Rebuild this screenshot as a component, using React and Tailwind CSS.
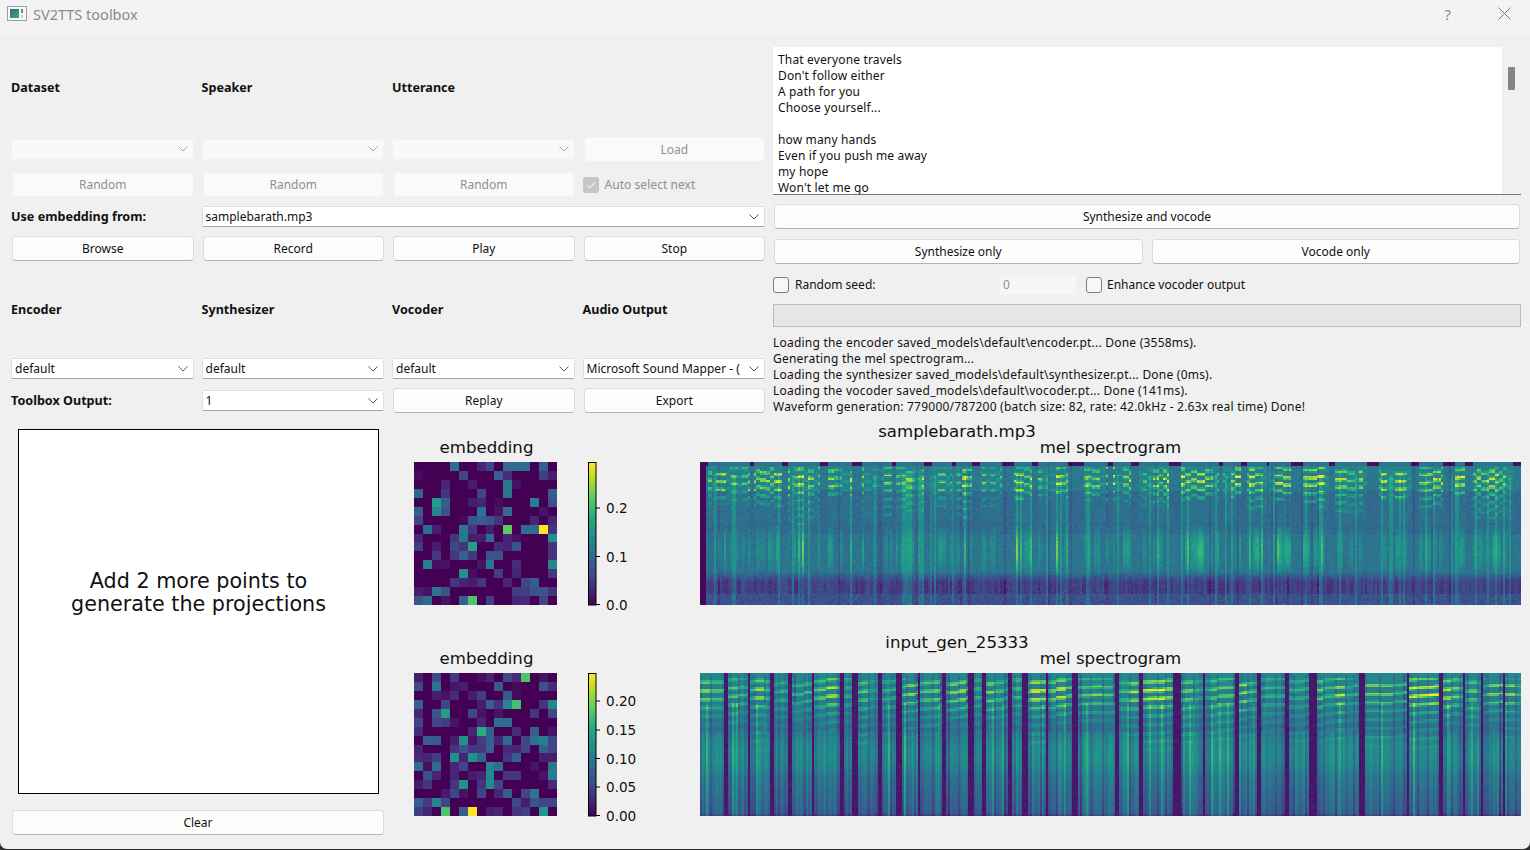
import React, { useMemo } from "react";

const STOPS = ["#440154","#482475","#414487","#355f8d","#2a788e","#21918c","#22a884","#44bf70","#7ad151","#bddf26","#fde725"];
const hexRgb = (h) => [1, 3, 5].map((i) => parseInt(h.slice(i, i + 2), 16));
function viridis(t) {
  const x = Math.max(0, Math.min(0.9999, t)) * 10;
  const i = Math.floor(x);
  const a = hexRgb(STOPS[i]);
  const b = hexRgb(STOPS[i + 1]);
  const f = x - i;
  return `rgb(${a.map((v, k) => Math.round(v + (b[k] - v) * f)).join(",")})`;
}
function rng(seed) {
  let s = seed;
  return () => {
    s = (s * 1664525 + 1013904223) % 4294967296;
    return s / 4294967296;
  };
}

const HEAT1 = [
  {4:.35,7:.1,8:.2,10:.35,11:.35,12:.35,14:.3},
  {0:.03,5:.2,9:.3,10:.12,14:.18,15:.08},
  {3:.1,6:.07,10:.4,11:.05},
  {0:.33,3:.15,7:.2,10:.38,15:.3},
  {2:.55,3:.3,6:.08,7:.1,9:.03,13:.42,15:.25},
  {0:.3,2:.45,3:.25,7:.38,9:.05,10:.35,14:.05},
  {0:.2,5:.03,6:.27,7:.3,8:.25,9:.15,13:.1,15:.1},
  {1:.35,2:.08,5:.4,6:.15,8:.08,10:.75,12:.35,13:.35,14:1,15:.15},
  {0:.1,4:.15,5:.4,6:.08,7:.08,8:.35,10:.1,11:.05,15:.5},
  {0:.18,2:.08,4:.22,5:.15,6:.55,9:.12,10:.1,11:.25,15:.15},
  {2:.17,4:.15,5:.3,6:.15,8:.25,9:.25,15:.15},
  {1:.42,2:.04,3:.05,7:.06,8:.4,11:.12,15:.45},
  {5:.5,6:.04,9:.18,11:.1,15:.15},
  {4:.15,5:.1,6:.08,7:.15,10:.1,12:.2,13:.3},
  {0:.08,1:.05,2:.38,3:.25,11:.17,12:.18,13:.25,14:.25,15:.15},
  {0:.25,1:.35,3:.05,5:.3,6:.72,8:.18,11:.1,12:.12,14:.2},
];
const HEAT2 = [
  {0:.08,2:.22,4:.15,7:.04,8:.1,10:.22,11:.12,12:.72,14:.05},
  {0:.22,2:.38,4:.06,5:.08,9:.28,11:.03,14:.25,15:.12},
  {2:.08,3:.05,4:.12,6:.08,7:.18,10:.28,11:.03},
  {0:.3,3:.2,7:.08,8:.3,9:.15,10:.45,11:.7,14:.15,15:.45},
  {0:.1,2:.25,3:.55,6:.2,7:.05,9:.05,13:.15,15:.22},
  {0:.2,2:.22,3:.18,4:.05,7:.1,9:.35,10:.35},
  {0:.12,6:.1,7:.62,8:.3,11:.12,13:.3,15:.05},
  {1:.3,2:.28,4:.08,5:.5,6:.05,7:.18,8:.3,9:.1,10:.35,12:.2,13:.38,14:.42,15:.2},
  {0:.1,4:.15,5:.25,6:.15,7:.15,8:.3,10:.12,11:.1,12:.2,14:.3,15:.2},
  {0:.12,1:.1,2:.18,4:.5,5:.1,6:.5,7:.32,10:.15,11:.3,14:.08,15:.08},
  {0:.35,1:.04,2:.35,4:.1,5:.2,8:.45,9:.35,13:.05,15:.4},
  {1:.25,2:.1,4:.1,6:.07,7:.1,8:.47,10:.15,11:.15,14:.05,15:.42},
  {0:.07,1:.15,4:.15,5:.5,7:.15,8:.47,9:.2,15:.12},
  {3:.07,4:.2,5:.05,7:.2,9:.1,10:.3,12:.2,13:.38},
  {0:.3,1:.17,2:.45,3:.2,11:.22,12:.08,13:.27,14:.2,15:.2},
  {0:.18,1:.1,3:.72,5:.3,6:1,8:.08,9:.1,11:.15,12:.18,14:.52},
];

const BURSTS = [[707,748],[753,780],[787,818],[827,850],[862,890],[895,922],[932,950],[955,970],[980,1000],[1014,1031],[1038,1067],[1083,1107],[1112,1128],[1138,1167],[1179,1217],[1222,1238],[1246,1264],[1267,1288],[1302,1326],[1333,1364],[1377,1408],[1417,1441],[1453,1463],[1472,1510]];
const SILENCE = [[724,727],[747,749],[770,772],[787,791],[811,813],[839,842],[851,857],[877,881],[895,900],[917,919],[941,945],[968,972],[982,984],[1007,1010],[1022,1026],[1045,1047],[1071,1077],[1114,1116],[1138,1141],[1172,1179],[1201,1203],[1234,1237],[1255,1258],[1283,1287],[1308,1315],[1358,1362],[1405,1407],[1438,1441],[1462,1463],[1480,1481],[1501,1503]];

const COLS = 410;
const ROWS = 80;

function spec1() {
  const r = rng(71);
  const out = [];
  const burstInfo = BURSTS.map(() => ({ tail: 0.24 + r() * r() * 0.3, mid: 0.5 + r() * 0.5 }));
  let sub = 0;
  let gain = 1;
  let phase = 0;
  for (let c = 0; c < COLS; c++) {
    const x = 700 + c * 2;
    const bi = BURSTS.findIndex(([a, b]) => x >= a && x <= b);
    const inB = bi >= 0;
    const info = inB ? burstInfo[bi] : null;
    if (sub-- <= 0) {
      sub = 1 + Math.floor(r() * 3);
      gain = r() > 0.25 ? 0.6 + r() * 0.6 : 0.2;
      phase = r() * 0.055;
    }
    const line = r();
    const streak = r();
    const lowDepth = 0.09 + r() * 0.11;
    const col = [];
    for (let j = 0; j < ROWS; j++) {
      const f = j / ROWS;
      let v;
      if (f < 0.2) v = 0.43;
      else if (f < 0.5) v = 0.37;
      else if (f < 0.76) v = 0.39;
      else if (f < 0.83) v = 0.39 - ((f - 0.76) / 0.07) * (0.39 - lowDepth - 0.04);
      else if (f < 0.92) v = lowDepth + 0.04;
      else v = 0.22 + r() * 0.06;
      v += (r() - 0.5) * 0.06;
      if (f < 0.025) v = inB ? 0.38 : 0.08;
      if (inB && f >= 0.035 && f < info.tail) {
        const wave = Math.sin(((f + phase) / 0.055) * Math.PI * 2);
        const stripe = wave > 0 ? Math.pow(wave, 0.7) : 0;
        const w = Math.exp(-Math.pow((f - 0.12) / 0.1, 2));
        v += stripe * gain * (0.36 * w + 0.13) * (0.75 + r() * 0.45);
      }
      if (inB && f > 0.42 && f < 0.8) {
        const bump = Math.sin(((f - 0.42) / 0.38) * Math.PI);
        v += 0.32 * info.mid * streak * bump * gain - 0.03;
      }
      if (inB && line > 0.82 && f > 0.08) v += 0.13;
      if (!inB && line > 0.93 && f > 0.08) v += 0.1;
      if (line < 0.07) v -= 0.07;
      if (!inB && f < 0.5) v -= 0.03;
      if (x < 706) v = 0.03;
      col.push(v);
    }
    out.push(col);
  }
  return out;
}

function spec2() {
  const r = rng(311);
  const out = [];
  let phase = 0.01;
  let amp = 0.4;
  let drift = 0;
  let sub = 0;
  let gain = 1;
  let tail = 0.3;
  let edge = false;
  for (let c = 0; c < COLS; c++) {
    const x = 700 + c * 2;
    const sil = SILENCE.some(([a, b]) => x >= a && x <= b);
    const near = SILENCE.some(([a, b]) => x >= a - 3 && x <= b + 3);
    if (sil) {
      phase = r() * 0.06;
      amp = 0.18 + r() * 0.26;
      drift = r() * 0.0012;
      tail = 0.28 + r() * 0.2;
    }
    edge = false;
    if (sub-- <= 0) {
      sub = 3 + Math.floor(r() * 5);
      gain = 0.5 + r() * 0.7;
      edge = true;
      phase += r() * 0.014 - 0.004;
    }
    phase += drift;
    const bright = r();
    const low = r();
    const col = [];
    for (let j = 0; j < ROWS; j++) {
      const f = j / ROWS;
      let v;
      if (f < 0.4) v = 0.46 - (f / 0.4) * 0.09;
      else if (f < 0.72) v = 0.37 + Math.sin(((f - 0.4) / 0.32) * Math.PI) * 0.08;
      else v = 0.37 - ((f - 0.72) / 0.28) * 0.09;
      if (f > 0.975) v = 0.2;
      v += (r() - 0.5) * 0.02;
      if (f >= 0.03 && f < tail + 0.1) {
        const wave = Math.sin(((f + phase) / 0.06) * Math.PI * 2);
        const s = wave > 0 ? Math.pow(wave, 0.7) : 0;
        const w = Math.exp(-Math.pow((f - 0.13) / 0.12, 2));
        const fade = f < tail ? 1 : 1 - (f - tail) / 0.1;
        v += s * gain * (amp * w + 0.1 * fade);
      }
      if (edge && f > 0.01) v -= 0.1;
      if (bright > 0.9 && f > 0.2) v += 0.15;
      if (f > 0.4) v += low * low * 0.1;
      if (near) v -= 0.07;
      if (sil) v = 0.05 + r() * 0.03;
      col.push(v);
    }
    out.push(col);
  }
  return out;
}

function Spectrogram({ make }) {
  const paths = useMemo(() => {
    const data = make();
    const LEVELS = 48;
    const buckets = Array.from({ length: LEVELS }, () => []);
    data.forEach((col, c) => {
      col.forEach((v, j) => {
        const k = Math.max(0, Math.min(LEVELS - 1, Math.round(v * (LEVELS - 1))));
        buckets[k].push(`M${c} ${j}h1v1h-1z`);
      });
    });
    return buckets.map((b, i) => ({ d: b.join(""), fill: viridis(i / (LEVELS - 1)) }));
  }, [make]);
  return (
    <div className="w-[821px] h-[143px] shrink-0 overflow-hidden">
      <svg width="821" height="143" viewBox={`0 0 ${COLS} ${ROWS}`} preserveAspectRatio="none" shapeRendering="crispEdges" className="block blur-[0.7px]">
        {paths.map((p, i) => p.d && <path key={i} d={p.d} fill={p.fill} />)}
      </svg>
    </div>
  );
}

function Heatmap({ data }) {
  return (
    <svg width="143" height="143" viewBox="0 0 16 16" shapeRendering="crispEdges" className="block shrink-0">
      {data.map((row, y) =>
        Array.from({ length: 16 }, (_, x) => (
          <rect key={x} x={x} y={y} width="1" height="1" fill={viridis(row[x] || 0)} />
        ))
      )}
    </svg>
  );
}

function Colorbar({ id, ticks }) {
  return (
    <svg width="112" height="143" className="block shrink-0 overflow-visible">
      <defs>
        <linearGradient id={id} x1="0" y1="1" x2="0" y2="0">
          {STOPS.map((c, i) => <stop key={i} offset={i / 10} stopColor={c} />)}
        </linearGradient>
      </defs>
      <rect x="0.5" y="0.5" width="7.5" height="142.5" fill={`url(#${id})`} stroke="#000" strokeWidth="1" />
      {ticks.map(([label, y]) => (
        <g key={label}>
          <line x1="8" x2="12" y1={y} y2={y} stroke="#000" strokeWidth="1" />
          <text x="18" y={y + 5} fontSize="13.6" fill="#111" style={{ fontFamily: '"DejaVu Sans", sans-serif' }}>{label}</text>
        </g>
      ))}
    </svg>
  );
}

function Plot({ heading, heat, id, ticks, make, className }) {
  return (
    <div className={className}>
      <div className="h-5 leading-[22px] text-center text-[16.6px] text-[#111]">{heading}</div>
      <div className="flex h-[21px] text-[16.6px] leading-[14px] text-[#111]">
        <div className="ml-[31px] w-[143px] text-center">embedding</div>
        <div className="w-[142px]" />
        <div className="w-[821px] text-center">mel spectrogram</div>
      </div>
      <div className="flex pl-[30px]">
        <Heatmap data={heat} />
        <div className="ml-[31px]"><Colorbar id={id} ticks={ticks} /></div>
        <Spectrogram make={make} />
      </div>
    </div>
  );
}

const Chevron = ({ off }) => (
  <svg width="10" height="6" viewBox="0 0 10 6" fill="none" stroke={off ? "#a8a8a8" : "#5a5a5a"} strokeWidth="1" className="shrink-0">
    <path d="M0.5 0.5 L5 5 L9.5 0.5" />
  </svg>
);

function Combo({ value, off, className = "" }) {
  return (
    <div className={`h-[21px] flex items-center justify-between pl-[3px] pr-[5px] border border-solid rounded-[2px] overflow-hidden whitespace-nowrap ${off ? "bg-[#f9f9f9] border-[#f2f2f2]" : "bg-white border-[#dedede] border-b-[#a5a5a5]"} ${className}`}>
      <span className="flex-1">{value}</span>
      <span className="ml-[3px] flex"><Chevron off={off} /></span>
    </div>
  );
}

function Btn({ children, off, className = "" }) {
  return (
    <button className={`h-[25px] flex items-center justify-center rounded-[4px] border border-solid ${off ? "bg-[#fafafa] border-[#f3f3f3] text-[#8f8f8f]" : "bg-[#fdfdfd] border-[#dcdcdc] border-b-[#b4b4b4] text-[#111]"} ${className}`}>
      {children}
    </button>
  );
}

const Label = ({ children, className = "" }) => <div className={`font-bold text-[12.6px] text-[#111] whitespace-nowrap ${className}`}>{children}</div>;

const Check = ({ className = "" }) => (
  <span className={`w-4 h-4 shrink-0 rounded-[3px] border border-solid border-[#7d7d7d] bg-[#f7f7f7] ${className}`} />
);

const grid4 = "grid grid-cols-4 gap-x-[8px] items-center";

const LOG = [
  "Loading the encoder saved_models\\default\\encoder.pt... Done (3558ms).",
  "Generating the mel spectrogram...",
  "Loading the synthesizer saved_models\\default\\synthesizer.pt... Done (0ms).",
  "Loading the vocoder saved_models\\default\\vocoder.pt... Done (141ms).",
  "Waveform generation: 779000/787200 (batch size: 82, rate: 42.0kHz - 2.63x real time) Done!",
];
const LYRICS = ["That everyone travels", "Don't follow either", "A path for you", "Choose yourself...", "\u00a0", "how many hands", "Even if you push me away", "my hope", "Won't let me go"];

export default function App() {
  return (
    <div className="w-[1530px] h-[850px] bg-[#2e2e2e] overflow-hidden">
      <div className="h-[849px] bg-[#f0f0f0] rounded-b-[7px] overflow-hidden flex flex-col text-[12px] leading-4 text-[#111]" style={{ fontFamily: '"Noto Sans", sans-serif' }}>
        <header className="h-[34px] shrink-0 bg-[#f3f3f3] flex items-center pb-[7px] pl-[7px] pr-[19px] text-[#8b8b8b]">
          <svg width="20" height="15" viewBox="0 0 20 15" className="shrink-0">
            <defs>
              <linearGradient id="ic" x1="0" y1="0" x2="1" y2="1">
                <stop offset="0" stopColor="#2a6f7e" />
                <stop offset="1" stopColor="#45a873" />
              </linearGradient>
            </defs>
            <rect x="0.5" y="0.5" width="19" height="14" fill="#f8f8f8" stroke="#9c9c9c" />
            <rect x="3" y="3" width="9" height="9" fill="url(#ic)" />
            <rect x="14" y="3" width="2" height="4" fill="#4f8f8f" />
            <rect x="14" y="9" width="2" height="3" fill="#b9cfcf" />
          </svg>
          <span className="ml-[6px] text-[14.5px]">SV2TTS toolbox</span>
          <span className="ml-auto text-[15px] mr-[47px]">?</span>
          <svg width="13" height="13" viewBox="0 0 13 13" stroke="#7a7a7a" strokeWidth="1" fill="none">
            <path d="M0.5 0.5 L12.5 12.5 M12.5 0.5 L0.5 12.5" />
          </svg>
        </header>

        <div className="flex h-[387px] shrink-0">
          <section className="w-[770px] shrink-0 pl-[11px] pr-[5px] pt-[43px]">
            <div className={`${grid4} h-[22px]`}>
              <Label>Dataset</Label><Label>Speaker</Label><Label>Utterance</Label>
            </div>
            <div className={`${grid4} h-[25px] mt-[37px]`}>
              <Combo off /><Combo off /><Combo off />
              <Btn off className="ml-px mt-px">Load</Btn>
            </div>
            <div className={`${grid4} h-[25px] mt-[11px]`}>
              <Btn off className="ml-px">Random</Btn><Btn off className="ml-px">Random</Btn><Btn off className="ml-px">Random</Btn>
              <div className="flex items-center text-[#8f8f8f] tracking-[0.05px]">
                <span className="w-4 h-4 rounded-[3px] bg-[#c6c6c6] flex items-center justify-center shrink-0">
                  <svg width="10" height="8" viewBox="0 0 10 8" fill="none" stroke="#fff" strokeWidth="1"><path d="M1 4 L4 7 L9 1" /></svg>
                </span>
                <span className="ml-[6px]">Auto select next</span>
              </div>
            </div>
            <div className={`${grid4} h-[21px] mt-[9px]`}>
              <Label>Use embedding from:</Label>
              <Combo value="samplebarath.mp3" className="col-span-3" />
            </div>
            <div className={`${grid4} h-[25px] mt-[9px]`}>
              <Btn className="ml-px">Browse</Btn><Btn className="ml-px">Record</Btn><Btn className="ml-px">Play</Btn><Btn className="ml-px">Stop</Btn>
            </div>
            <div className={`${grid4} h-[22px] mt-[38px]`}>
              <Label>Encoder</Label><Label>Synthesizer</Label><Label>Vocoder</Label><Label>Audio Output</Label>
            </div>
            <div className={`${grid4} h-[25px] mt-[35px]`}>
              <Combo value="default" /><Combo value="default" /><Combo value="default" />
              <Combo value="Microsoft Sound Mapper - (" />
            </div>
            <div className={`${grid4} h-[25px] mt-[7px]`}>
              <Label>Toolbox Output:</Label>
              <Combo value="1" />
              <Btn className="ml-px">Replay</Btn><Btn className="ml-px">Export</Btn>
            </div>
          </section>

          <section className="w-[760px] shrink-0 pl-[3px] pr-[9px] pt-[13px]">
            <div className="h-[148px] flex border-b border-solid border-b-[#767676] overflow-hidden">
              <div className="flex-1 bg-white pl-[5px] pt-[5px] tracking-[0.15px]">
                {LYRICS.map((l, i) => <div key={i}>{l}</div>)}
              </div>
              <div className="w-[19px] shrink-0 flex justify-center pt-[20px] pr-[1px]">
                <div className="w-[7px] h-[23px] rounded-[1px] bg-[#858585]" />
              </div>
            </div>
            <div className="grid px-px mt-[9px]">
              <Btn>Synthesize and vocode</Btn>
            </div>
            <div className="grid grid-cols-2 gap-x-[9px] px-px mt-[10px]">
              <Btn>Synthesize only</Btn><Btn>Vocode only</Btn>
            </div>
            <div className="flex items-center h-[21px] mt-[10px]">
              <Check />
              <span className="ml-[6px] w-[204px]">Random seed:</span>
              <div className="w-[78px] h-[21px] flex items-center pl-[3px] bg-[#f6f6f6] border border-solid border-[#f2f2f2] text-[#8f8f8f]">0</div>
              <Check className="ml-[9px]" />
              <span className="ml-[5px]">Enhance vocoder output</span>
            </div>
            <div className="h-[23px] mt-[9px] bg-[#e6e6e6] border border-solid border-[#bcbcbc]" />
            <div className="mt-[8px] whitespace-nowrap tracking-[0.22px]">
              {LOG.map((l) => <div key={l}>{l}</div>)}
            </div>
          </section>
        </div>

        <div className="flex flex-1 min-h-0">
          <section className="w-[384px] shrink-0 pl-[12px] flex flex-col">
            <div className="mt-[8px] ml-[6px] mr-[5px] h-[365px] pb-[38px] bg-white border-[1.5px] border-solid border-black flex items-center justify-center text-center text-[20.7px] leading-[23px] text-[#111]" style={{ fontFamily: '"DejaVu Sans", sans-serif' }}>
              <div>Add 2 more points to<br />generate the projections</div>
            </div>
            <Btn className="mt-[16px]">Clear</Btn>
          </section>
          <section className="flex-1 min-w-0" style={{ fontFamily: '"DejaVu Sans", sans-serif' }}>
            <Plot heading="samplebarath.mp3" heat={HEAT1} id="cb1" make={spec1} ticks={[["0.2", 46], ["0.1", 94.5], ["0.0", 142.5]]} />
            <Plot className="mt-[27px]" heading="input_gen_25333" heat={HEAT2} id="cb2" make={spec2} ticks={[["0.20", 28], ["0.15", 57], ["0.10", 85.5], ["0.05", 114], ["0.00", 142.5]]} />
          </section>
        </div>
      </div>
    </div>
  );
}
